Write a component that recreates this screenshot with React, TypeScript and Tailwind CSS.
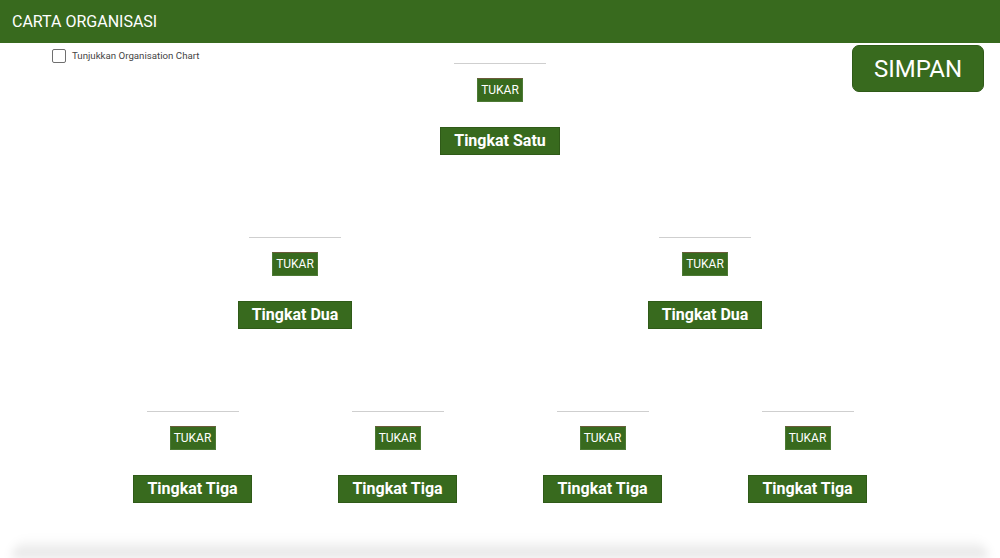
import React from "react";

type OrgNode = { title: string; children?: OrgNode[] };

const chart: OrgNode = {
  title: "Tingkat Satu",
  children: [
    { title: "Tingkat Dua", children: [{ title: "Tingkat Tiga" }, { title: "Tingkat Tiga" }] },
    { title: "Tingkat Dua", children: [{ title: "Tingkat Tiga" }, { title: "Tingkat Tiga" }] },
  ],
};

function NodeCard({ node }: { node: OrgNode }) {
  return (
    <div className="flex flex-1 flex-col items-center">
      <div className="h-px w-[92px] bg-[#cfcfcf]" />
      <button className="mt-[14px] flex h-[24px] w-[46px] items-center justify-center border border-[#6b5a3a] border-l-[#4d7a35] border-r-[#4d7a35] border-b-[#4d7a35] bg-[#386a1e] text-[12px] text-white">
        TUKAR
      </button>
      <div className="mt-[25px] flex h-[28px] items-center border border-[#2f5a18] bg-[#386a1e] px-[13px] text-[16px] font-bold text-white">
        {node.title}
      </div>
      {node.children && (
        <div className="mt-[82px] flex w-full">
          {node.children.map((c, i) => (
            <NodeCard key={i} node={c} />
          ))}
        </div>
      )}
    </div>
  );
}

export default function App() {
  return (
    <div
      className="flex h-[558px] w-[1000px] flex-col overflow-hidden bg-white"
      style={{ fontFamily: "Roboto, 'Liberation Sans', sans-serif" }}
    >
      <header className="flex h-[43px] shrink-0 items-center bg-[#386a1e] px-[12px]">
        <h1 className="text-[16px] text-white">CARTA ORGANISASI</h1>
      </header>

      <div className="flex shrink-0 items-start justify-between pl-[52px] pr-[16px] pt-[2px]">
        <label className="mt-[4px] flex items-center gap-[6px]">
          <span className="h-[14px] w-[14px] rounded-[2px] border-[1.5px] border-[#6f6f6f] bg-white" />
          <span className="text-[9.7px] text-[#444]">Tunjukkan Organisation Chart</span>
        </label>
        <button className="flex h-[47px] w-[132px] items-center justify-center rounded-[7px] border border-[#2f5a18] bg-[#386a1e] text-[24px] text-white">
          SIMPAN
        </button>
      </div>

      <div className="mx-auto -mt-[29px] flex w-[820px]">
        <NodeCard node={chart} />
      </div>

      <div className="flex-1" />
      <div className="mx-[12px] h-[20px] shrink-0 rounded-t-[24px] bg-[linear-gradient(to_bottom,rgba(0,0,0,0),rgba(0,0,0,0.12))] blur-[5px]" />
    </div>
  );
}
